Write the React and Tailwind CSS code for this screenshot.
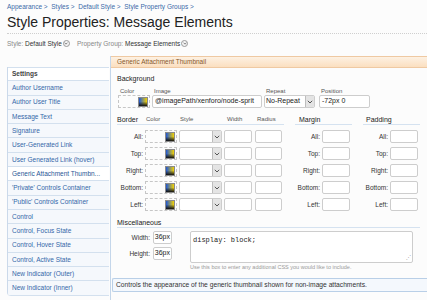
import React from "react";

const tabs = [
  "Author Username",
  "Author User Title",
  "Message Text",
  "Signature",
  "User-Generated Link",
  "User Generated Link (hover)",
  "Generic Attachment Thumbn...",
  "'Private' Controls Container",
  "'Public' Controls Container",
  "Control",
  "Control, Focus State",
  "Control, Hover State",
  "Control, Active State",
  "New Indicator (Outer)",
  "New Indicator (Inner)",
];

const sides = ["All:", "Top:", "Right:", "Bottom:", "Left:"];

function Field({ className = "", children }) {
  return (
    <div
      className={
        "h-[13px] shrink-0 rounded-[2px] border border-[#cdcdcd] bg-white flex items-center text-[7px] text-[#222] overflow-hidden whitespace-nowrap " +
        className
      }
    >
      {children}
    </div>
  );
}

function Swatch() {
  return (
    <div className="w-[10px] h-[10px] border border-[#8a8a8a] bg-[linear-gradient(to_bottom,transparent_45%,#111),linear-gradient(to_right,#1d57d8,#f4d200)]" />
  );
}

function ColorBox() {
  return (
    <div className="w-[32px] h-[13px] shrink-0 border border-dashed border-[#c6c6c6] flex items-center justify-end pr-[1px]">
      <Swatch />
    </div>
  );
}

function Chevron() {
  return (
    <svg width="6" height="4" viewBox="0 0 6 4">
      <path d="M0.8 0.8 L3 3 L5.2 0.8" fill="none" stroke="#555" strokeWidth="1" />
    </svg>
  );
}

function Select({ className = "", value }) {
  return (
    <div
      className={
        "h-[13px] shrink-0 rounded-[2px] border border-[#cdcdcd] bg-white flex items-stretch overflow-hidden " +
        className
      }
    >
      <div className="flex-1 min-w-0 flex items-center pl-[1px] text-[7px] text-[#222] whitespace-nowrap overflow-hidden">
        {value}
      </div>
      <div className="w-[9px] shrink-0 bg-[#e4e4e4] border-l border-[#bdbdbd] flex items-center justify-center">
        <Chevron />
      </div>
    </div>
  );
}

function RoundArrow() {
  return (
    <span className="inline-flex w-[7px] h-[7px] rounded-full border border-[#9a9a9a] bg-[#f3f3f3] items-center justify-center ml-[1px] align-middle">
      <svg width="4" height="3" viewBox="0 0 6 4">
        <path d="M0.8 0.8 L3 3 L5.2 0.8" fill="none" stroke="#666" strokeWidth="1.2" />
      </svg>
    </span>
  );
}

function Label({ children, className = "" }) {
  return <div className={"text-[6px] leading-[7px] text-[#555] " + className}>{children}</div>;
}

function Heading({ children, className = "" }) {
  return <div className={"text-[7px] leading-[9px] text-[#222] " + className}>{children}</div>;
}

function SideField({ label }) {
  return (
    <div className="flex items-center gap-[2px]">
      <div className="w-[25px] text-right text-[6.5px] text-[#333]">{label}</div>
      <Field className="w-[28px]" />
    </div>
  );
}

export default function App() {
  return (
    <div className="w-[427px] h-[300px] overflow-hidden bg-[#fcfcfc] font-['Liberation_Sans',Arial,sans-serif]">
      <div className="pl-[7px]">
        <div className="mt-[2px] h-[9px] leading-[9px] text-[6.5px] text-[#3b6aa8] whitespace-nowrap">
          Appearance &gt;&nbsp; Styles &gt;&nbsp; Default Style &gt;&nbsp; Style Property Groups &gt;
        </div>
        <div className="pb-[2px] border-b border-dotted border-[#cfcfcf]">
          <div className="mt-[2px] h-[18px] leading-[18px] text-[14px] text-[#222] whitespace-nowrap">
            Style Properties: Message Elements
          </div>
        </div>
        <div className="mt-[5px] h-[9px] leading-[9px] text-[6.5px] whitespace-nowrap flex items-center">
          <span className="text-[#888]">Style:&nbsp;</span>
          <span className="text-[#333]">Default Style</span>
          <RoundArrow />
          <span className="text-[#888] ml-[7px]">Property Group:&nbsp;</span>
          <span className="text-[#333]">Message Elements</span>
          <RoundArrow />
        </div>
      </div>

      <div className="mt-[8px] flex items-start">
        <div className="ml-[7px] mt-[11px] w-[102px] shrink-0 border-l border-[#cbd9ea] rounded-bl-[4px] overflow-hidden">
          <div className="h-[14.3px] flex items-center pl-[4px] border-t border-b border-[#d3e0ee] bg-white text-[6.5px] text-[#444] font-semibold">
            Settings
          </div>
          {tabs.map((t) => (
            <div
              key={t}
              className={`h-[14.3px] flex items-center pl-[4px] border-b border-[#d3e0ee] text-[6.5px] whitespace-nowrap ${
                t.startsWith("Generic") ? "bg-white text-[#1f5595]" : "bg-[#f5f8fc] text-[#3467a8]"
              }`}
            >
              {t}
            </div>
          ))}
        </div>

        <div className="ml-[1px] flex-1 h-[244px] border-l border-[#c4d6ea]">
          <div className="h-[12px] flex items-center pl-[6px] border-t border-b border-[#efc9a2] bg-[linear-gradient(to_bottom,#fdf1e3,#fbdfc0)] text-[6.5px] text-[#86582c] whitespace-nowrap">
            Generic Attachment Thumbnail
          </div>

          <div className="pl-[6px]">
            <Heading className="mt-[6px]">Background</Heading>
            <div className="mt-[5px] flex items-start">
              <div className="ml-[1px] flex flex-col">
                <Label className="pl-[2px]">Color</Label>
                <ColorBox />
              </div>
              <div className="ml-[2px] flex flex-col">
                <Label className="pl-[2px]">Image</Label>
                <Field className="w-[110px] pl-[2px] text-[6.9px]">@imagePath/xenforo/node-sprit</Field>
              </div>
              <div className="ml-[2px] flex flex-col">
                <Label className="pl-[2px]">Repeat</Label>
                <Select className="w-[51px]" value="No-Repeat" />
              </div>
              <div className="ml-[4px] flex flex-col">
                <Label className="pl-[2px]">Position</Label>
                <Field className="w-[51px] pl-[2px]">-72px 0</Field>
              </div>
            </div>

            <div className="mt-[7px] flex items-start">
              <div className="w-[167px]">
                <div className="h-[10px] flex items-center border-b border-[#d5e2f0] whitespace-nowrap">
                  <Heading className="w-[29px]">Border</Heading>
                  <Label className="w-[34px]">Color</Label>
                  <Label className="w-[47px]">Style</Label>
                  <Label className="w-[30px]">Width</Label>
                  <Label>Radius</Label>
                </div>
                <div className="mt-[5px] flex flex-col gap-[4px]">
                  {sides.map((s) => (
                    <div key={s} className="flex items-center">
                      <div className="w-[26px] text-right text-[6.5px] text-[#333]">{s}</div>
                      <div className="ml-[2px]">
                        <ColorBox />
                      </div>
                      <Select className="ml-[2px] w-[43px]" value="" />
                      <Field className="ml-[2px] w-[28px]" />
                      <Field className="ml-[3px] w-[27px]" />
                    </div>
                  ))}
                </div>
              </div>

              <div className="ml-[11px] w-[57px]">
                <div className="h-[10px] flex items-center border-b border-[#d5e2f0]">
                  <Heading className="pl-[4px]">Margin</Heading>
                </div>
                <div className="mt-[5px] flex flex-col gap-[4px]">
                  {sides.map((s) => (
                    <SideField key={s} label={s} />
                  ))}
                </div>
              </div>

              <div className="ml-[11px] w-[57px]">
                <div className="h-[10px] flex items-center border-b border-[#d5e2f0]">
                  <Heading className="pl-[3px]">Padding</Heading>
                </div>
                <div className="mt-[5px] flex flex-col gap-[4px]">
                  {sides.map((s) => (
                    <SideField key={s} label={s} />
                  ))}
                </div>
              </div>
            </div>

            <div className="mt-[7px] mr-[7px] h-[10px] flex items-center border-b border-[#d5e2f0]">
              <Heading>Miscellaneous</Heading>
            </div>
            <div className="mt-[3px] flex items-start">
              <div className="flex flex-col gap-[3px]">
                <div className="flex items-center">
                  <div className="w-[33px] text-right text-[6.5px] text-[#333]">Width:</div>
                  <Field className="ml-[3px] w-[19px] justify-end pr-[1px]">36px</Field>
                </div>
                <div className="flex items-center">
                  <div className="w-[33px] text-right text-[6.5px] text-[#333]">Height:</div>
                  <Field className="ml-[3px] w-[19px] justify-end pr-[1px]">36px</Field>
                </div>
              </div>
              <div className="ml-[18px] flex flex-col">
                <div className="relative w-[223px] h-[32px] rounded-[2px] border border-[#cdcdcd] bg-white px-[2px] pt-[4px] font-['Liberation_Mono',monospace] text-[7px] leading-[8px] text-[#222]">
                  display: block;
                  <div className="absolute right-[1px] bottom-[1px] text-[5px] leading-[5px] text-[#999]">⋰</div>
                </div>
                <div className="mt-[1px] h-[7px] leading-[7px] text-[5.5px] text-[#9a9a9a] whitespace-nowrap">
                  Use this box to enter any additional CSS you would like to include.
                </div>
              </div>
            </div>
          </div>

          <div className="ml-[1px] mt-[7px] h-[14px] flex items-center pl-[3px] border border-r-0 border-[#b9cfe7] rounded-l-[2px] bg-[#f4f8fd] text-[6.7px] text-[#333] whitespace-nowrap">
            Controls the appearance of the generic thumbnail shown for non-image attachments.
          </div>
        </div>
      </div>
    </div>
  );
}
